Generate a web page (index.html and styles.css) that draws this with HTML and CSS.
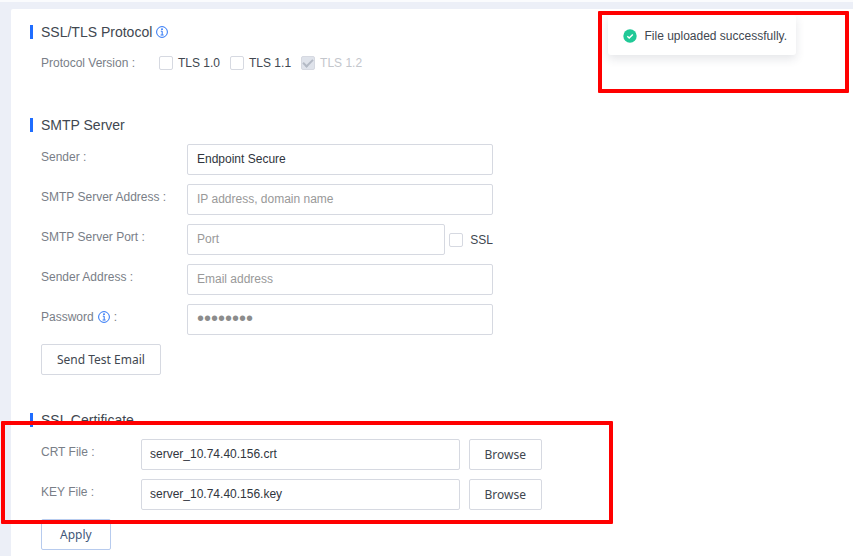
FILE: index.html
```html
<!DOCTYPE html>
<html lang="en">
<head>
    <meta charset="UTF-8">
    <meta name="viewport" content="width=device-width, initial-scale=1.0">
    <title>Endpoint Secure</title>
    <link rel="stylesheet" href="styles.css">
</head>
<body>
    <main class="panel">
        <section class="section">
            <h2 class="title">SSL/TLS Protocol
                <svg class="info" viewBox="0 0 12 12"><circle cx="6" cy="6" r="5.4"/><path d="M4.8 5.2h1.4v3.6M4.6 9h3"/><rect x="5.2" y="2.4" width="1.6" height="1.6"/></svg>
            </h2>
            <div class="row row-checks">
                <span class="label">Protocol Version :</span>
                <label class="check"><input type="checkbox">TLS 1.0</label>
                <label class="check"><input type="checkbox">TLS 1.1</label>
                <label class="check disabled"><input type="checkbox" checked disabled>TLS 1.2</label>
            </div>
        </section>

        <section class="section section-smtp">
            <h2 class="title">SMTP Server</h2>
            <div class="row">
                <label class="label" for="sender">Sender :</label>
                <div class="fields"><input class="text" id="sender" type="text" value="Endpoint Secure"></div>
            </div>
            <div class="row">
                <label class="label" for="server">SMTP Server Address :</label>
                <div class="fields"><input class="text" id="server" type="text" placeholder="IP address, domain name"></div>
            </div>
            <div class="row">
                <label class="label" for="port">SMTP Server Port :</label>
                <div class="fields">
                    <input class="text" id="port" type="text" placeholder="Port">
                    <label class="check check-ssl"><input type="checkbox">SSL</label>
                </div>
            </div>
            <div class="row">
                <label class="label" for="address">Sender Address :</label>
                <div class="fields"><input class="text" id="address" type="text" placeholder="Email address"></div>
            </div>
            <div class="row">
                <label class="label" for="password">Password
                    <svg class="info" viewBox="0 0 12 12"><circle cx="6" cy="6" r="5.4"/><path d="M4.8 5.2h1.4v3.6M4.6 9h3"/><rect x="5.2" y="2.4" width="1.6" height="1.6"/></svg>
                    :</label>
                <div class="fields"><input class="text password" id="password" type="password" value="password"></div>
            </div>
            <button class="btn" type="button">Send Test Email</button>
        </section>

        <section class="section section-cert">
            <h2 class="title">SSL Certificate</h2>
            <div class="row">
                <label class="label" for="crt">CRT File :</label>
                <div class="fields">
                    <input class="text" id="crt" type="text" value="server_10.74.40.156.crt">
                    <button class="btn" type="button">Browse</button>
                </div>
            </div>
            <div class="row">
                <label class="label" for="key">KEY File :</label>
                <div class="fields">
                    <input class="text" id="key" type="text" value="server_10.74.40.156.key">
                    <button class="btn" type="button">Browse</button>
                </div>
            </div>
            <button class="btn btn-apply" type="button">Apply</button>
        </section>
    </main>

    <div class="toast" role="status">
        <svg class="toast-icon" viewBox="0 0 14 14"><circle cx="7" cy="7" r="6.7"/><path d="M4.3 7.2l1.9 1.9 3.6-3.6"/></svg>
        File uploaded successfully.
    </div>

    <div class="mark mark-toast"></div>
    <div class="mark mark-cert"></div>
</body>
</html>
```
FILE: styles.css
```css
* {
    box-sizing: border-box;
}
body {
    margin: 0;
    padding: 7px 0 0 11px;
    border-top: 2px solid #fafbfd;
    min-height: 100vh;
    display: flex;
    position: relative;
    background: #eceff7;
    color: #414750;
    font: 12px/20px "Liberation Sans", Arial, sans-serif;
}
.panel {
    flex: 1;
    padding: 13px 20px 7px 19px;
    background: #fff;
    border-top-left-radius: 2px;
}
.section {
    padding-left: 11px;
    margin-bottom: 40px;
}
.section-smtp {
    margin-bottom: 35px;
}
.section-cert {
    margin-bottom: 0;
}
.title {
    display: flex;
    align-items: center;
    gap: 4px;
    margin: 0 0 9px -11px;
    font-size: 14px;
    font-weight: normal;
    line-height: 20px;
}
.title::before {
    content: "";
    width: 3px;
    height: 14px;
    margin-right: 4px;
    background: #1f6dff;
}
.info {
    flex: none;
    width: 12px;
    height: 12px;
    fill: none;
    stroke: #2b74f5;
}
.info rect {
    fill: #2b74f5;
    stroke: none;
}
.row {
    display: flex;
    align-items: flex-start;
    margin-bottom: 9px;
}
.row-checks {
    align-items: center;
    height: 24px;
    margin-bottom: 0;
}
.label {
    display: flex;
    align-items: center;
    width: 146px;
    line-height: 26px;
    color: #797e87;
}
.label .info {
    margin: 0 4px;
}
.row-checks .label {
    width: 118px;
}
.section-cert .label {
    width: 100px;
}
.fields {
    display: flex;
    width: 306px;
}
.section-cert .fields {
    width: 401px;
    gap: 9px;
}
.text {
    flex: 1;
    min-width: 0;
    height: 31px;
    padding: 0 9px 2px;
    border: 1px solid #d6d9e1;
    border-radius: 2px;
    background: #fff;
    color: #30353d;
    font: inherit;
}
.section-cert .text {
    padding: 0 8px 2px;
}
.text::placeholder {
    color: #999;
}
.password {
    color: #8c8c8c;
    font-size: 20px;
}
.check {
    display: flex;
    align-items: center;
    gap: 5px;
    margin-right: 10px;
}
.check input {
    appearance: none;
    width: 14px;
    height: 14px;
    margin: 0;
    border: 1px solid #d6d9e1;
    border-radius: 2px;
    background: #fff;
}
.check input:checked {
    display: grid;
    place-items: center;
    background: #dfe3eb;
}
.check input:checked::before {
    content: "";
    width: 8px;
    height: 4px;
    margin-bottom: 2px;
    border: solid #b4bac5;
    border-width: 0 0 2px 2px;
    transform: rotate(-45deg);
}
.disabled {
    color: #c3c6cc;
}
.check-ssl {
    gap: 7px;
    margin: 0 0 0 4px;
}
.btn {
    height: 31px;
    padding: 0 15px;
    border: 1px solid #d6d9e1;
    border-radius: 2px;
    background: #fff;
    color: #414750;
    font: 12px "Noto Sans", sans-serif;
    cursor: pointer;
}
.btn-apply {
    padding: 0 18px;
    border-color: #b7cbee;
    color: #425779;
}
.toast {
    position: absolute;
    top: 13px;
    right: 57px;
    display: flex;
    align-items: center;
    gap: 7px;
    height: 40px;
    padding: 2px 9px 0 15px;
    border-radius: 3px;
    background: #fff;
    box-shadow: 0 4px 10px rgba(40, 50, 70, 0.12);
}
.toast-icon {
    width: 14px;
    height: 14px;
    fill: #20c997;
}
.toast-icon path {
    fill: none;
    stroke: #fff;
    stroke-width: 1.4;
}
.mark {
    position: absolute;
    border: 4px solid #f00;
    border-radius: 1px;
    pointer-events: none;
}
.mark-toast {
    top: 9px;
    right: 4px;
    width: 251px;
    height: 82px;
}
.mark-cert {
    top: 419px;
    left: 1px;
    width: 612px;
    height: 103px;
}
```
